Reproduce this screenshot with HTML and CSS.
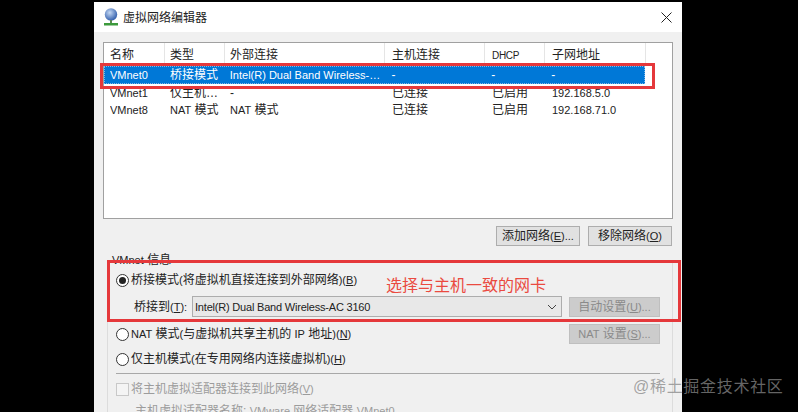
FILE: index.html
```html
<!DOCTYPE html>
<html lang="zh">
<head>
<meta charset="utf-8">
<title>虚拟网络编辑器</title>
<link rel="stylesheet" href="styles.css">
</head>
<body>
<div class="window">
  <header class="titlebar">
    <svg class="app-icon" width="16" height="18" viewBox="0 0 16 18">
      <defs><radialGradient id="g" cx="40%" cy="35%" r="70%"><stop offset="0" stop-color="#c4d8f4"/><stop offset="1" stop-color="#2a58a8"/></radialGradient></defs>
      <circle cx="8" cy="6.5" r="6.2" fill="url(#g)"/>
      <rect x="7" y="12" width="2" height="3.5" fill="#5a8a50"/>
      <rect x="1" y="15" width="14" height="2.5" fill="#3c9a3c"/>
    </svg>
    <span class="title">虚拟网络编辑器</span>
    <svg class="close" width="11" height="11" viewBox="0 0 11 11"><path d="M.5.5l10 10M10.5.5l-10 10" stroke="#222" fill="none"/></svg>
  </header>
  <main class="content">
    <section class="list">
      <div class="row head">
        <span class="c1">名称</span><span class="c2">类型</span><span class="c3">外部连接</span><span class="c4">主机连接</span><span class="c5 small">DHCP</span><span class="c6">子网地址</span>
      </div>
      <div class="row selected">
        <span class="c1 lat">VMnet0</span><span class="c2">桥接模式</span><span class="c3 lat">Intel(R) Dual Band Wireless-…</span><span class="c4">-</span><span class="c5">-</span><span class="c6">-</span>
      </div>
      <div class="row">
        <span class="c1 lat">VMnet1</span><span class="c2">仅主机…</span><span class="c3">-</span><span class="c4">已连接</span><span class="c5">已启用</span><span class="c6 lat">192.168.5.0</span>
      </div>
      <div class="row">
        <span class="c1 lat">VMnet8</span><span class="c2"><span class="lat">NAT</span> 模式</span><span class="c3"><span class="lat">NAT</span> 模式</span><span class="c4">已连接</span><span class="c5">已启用</span><span class="c6 lat">192.168.71.0</span>
      </div>
    </section>
    <div class="list-actions">
      <button class="btn">添加网络<span class="lat">(<u>E</u>)...</span></button>
      <button class="btn">移除网络<span class="lat">(<u>O</u>)</span></button>
    </div>
    <section class="group">
      <span class="legend"><span class="lat">VMnet</span> 信息</span>
      <div class="option first">
        <span class="radio checked"></span><span>桥接模式<span class="lat">(</span>将虚拟机直接连接到外部网络<span class="lat">)(<u>B</u>)</span></span>
      </div>
      <div class="bridge">
        <span class="bridge-label">桥接到<span class="lat">(<u>T</u>):</span></span>
        <div class="select"><span class="lat tight">Intel(R) Dual Band Wireless-AC 3160</span>
          <svg width="10" height="6" viewBox="0 0 10 6"><path d="M1 1l4 4 4-4" stroke="#444" fill="none"/></svg>
        </div>
        <button class="btn disabled auto">自动设置<span class="lat">(<u>U</u>)...</span></button>
      </div>
      <div class="option nat">
        <span class="radio"></span><span class="grow"><span class="lat">NAT</span> 模式<span class="lat">(</span>与虚拟机共享主机的 <span class="lat">IP</span> 地址<span class="lat">)(<u>N</u>)</span></span>
        <button class="btn disabled auto"><span class="lat">NAT</span> 设置<span class="lat">(<u>S</u>)...</span></button>
      </div>
      <div class="option host">
        <span class="radio"></span><span>仅主机模式<span class="lat">(</span>在专用网络内连接虚拟机<span class="lat">)(<u>H</u>)</span></span>
      </div>
      <hr class="sep">
      <div class="option check muted">
        <span class="checkbox"></span><span>将主机虚拟适配器连接到此网络<span class="lat">(<u>V</u>)</span></span>
      </div>
      <div class="adapter muted">主机虚拟适配器名称: <span class="lat">VMware</span> 网络适配器 <span class="lat">VMnet0</span></div>
    </section>
  </main>
</div>
<div class="mark mark-row"></div>
<div class="mark mark-bridge"></div>
<div class="note">选择与主机一致的网卡</div>
<div class="watermark">@稀土掘金技术社区</div>
</body>
</html>
```
FILE: styles.css
```css
* { box-sizing: border-box; }
html, body { margin: 0; height: 100%; }
body {
  background: #000;
  overflow: hidden;
  position: relative;
  font: 12px/16px "Liberation Sans", "Noto Sans CJK SC", sans-serif;
  color: #222;
}
.lat { font-size: 11px; }
.tight { letter-spacing: -.2px; }
.window {
  width: 588px;
  height: 410px;
  margin: 2px 0 0 94px;
  background: #f0f0f0;
  overflow: hidden;
}
.titlebar {
  height: 30px;
  background: #fff;
  display: flex;
  align-items: center;
  padding: 0 10px 0 9px;
}
.app-icon { margin-right: 4px; }
.title { flex: 1; margin-top: 1px; }
.close { margin-top: 1px; }
.content { padding: 10px 0 0 9px; }
.list {
  width: 570px;
  height: 177px;
  background: #fff;
  border: 1px solid #a0a0a0;
}
.row { display: flex; height: 17px; align-items: flex-start; white-space: nowrap; padding-left: 6px; }
.row > span { display: block; overflow: hidden; height: 18px; line-height: 18px; }
.row.head { height: 23px; }
.row.head > span { height: 23px; line-height: 25px; border-right: 1px solid #e5e5e5; }
.row.head > span.small { font-size: 10px; letter-spacing: -.3px; }
.row.selected { background: #0078d7; color: #fff; height: 18px; margin-right: 27px; outline: 1px dotted #7fb6e6; outline-offset: -1px; }
.c1 { width: 55px; }
.c2 { width: 60px; padding-left: 5px; }
.c3 { width: 160px; padding-left: 5px; }
.c4 { width: 100px; padding-left: 7px; }
.c5 { width: 60px; padding-left: 7px; }
.c6 { width: 101px; padding-left: 7px; }
.list-actions {
  display: flex;
  justify-content: flex-end;
  gap: 8px;
  width: 569px;
  margin-top: 7px;
}
.btn {
  font: inherit;
  color: inherit;
  width: 84px;
  height: 20px;
  padding: 0;
  background: #e1e1e1;
  border: 1px solid #adadad;
}
.btn.disabled { color: #8a8a8a; background: #ccc; border-color: #bfbfbf; width: 91px; }
.group {
  position: relative;
  width: 566px;
  height: 200px;
  margin: 14px 0 0 4px;
  border: 1px solid #dcdcdc;
  padding: 0 12px 0 8px;
}
.legend {
  position: absolute;
  left: 1px;
  top: -9px;
  background: #f0f0f0;
  padding: 0 3px;
}
.option { display: flex; align-items: center; }
.option.first { margin-top: 11px; height: 16px; }
.radio {
  width: 13px;
  height: 13px;
  border-radius: 50%;
  border: 1px solid #333;
  background: #fff;
  margin: 0 2px 0 0;
  flex: none;
  position: relative;
}
.radio.checked::after {
  content: "";
  position: absolute;
  inset: 2px;
  border-radius: 50%;
  background: #222;
}
.bridge { display: flex; align-items: center; margin-top: 8px; height: 21px; padding-left: 18px; }
.bridge-label { width: 58px; }
.select {
  width: 370px;
  height: 21px;
  margin-right: 7px;
  border: 1px solid #adadad;
  background: #e8e8e8;
  display: flex;
  align-items: center;
  justify-content: space-between;
  padding: 0 4px 0 2px;
}
.nat { margin-top: 7px; height: 20px; }
.grow { flex: 1; }
.host { margin-top: 5px; height: 20px; }
.sep { border: 0; border-top: 1px solid #a8a8a8; margin: 4px 0 0; }
.check { margin-top: 5px; height: 20px; }
.checkbox { width: 13px; height: 13px; border: 1px solid #c8c8c8; background: #f4f4f4; margin-right: 2px; flex: none; }
.muted { color: #9c9c9c; }
.adapter { margin: 4px 0 0 19px; white-space: nowrap; }
.mark { position: absolute; border: 3px solid #e5383b; }
.mark-row { left: 100px; top: 63px; width: 555px; height: 26px; }
.mark-bridge { left: 107px; top: 260px; width: 574px; height: 62px; }
.note { position: absolute; left: 386px; top: 277px; font-size: 16px; line-height: 18px; color: #ea4a40; }
.watermark { position: absolute; left: 633px; top: 378px; font-size: 16px; line-height: 18px; letter-spacing: .7px; color: rgba(135,135,135,.75); white-space: nowrap; }
```
